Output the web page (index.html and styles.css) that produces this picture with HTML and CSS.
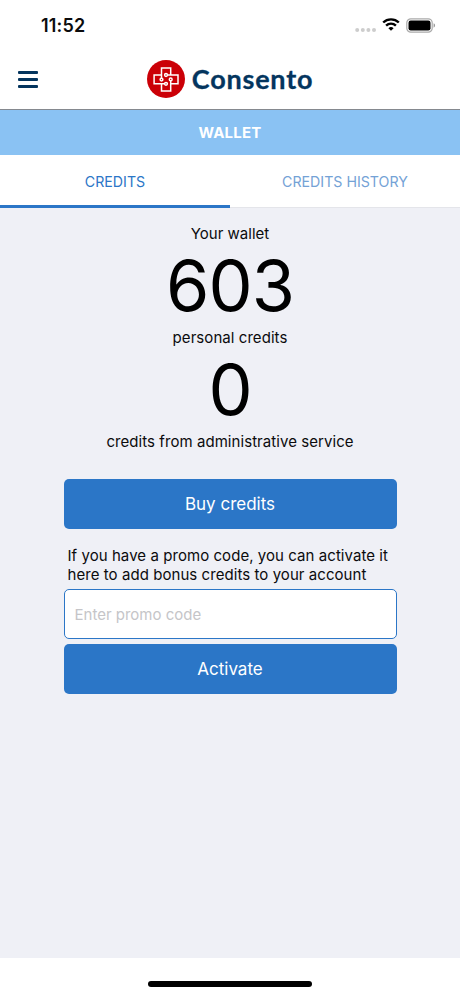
FILE: index.html
```html
<!DOCTYPE html>
<html lang="en">
<head>
  <meta charset="UTF-8" />
  <meta name="viewport" content="width=device-width, initial-scale=1" />
  <title>Consento - Wallet</title>
  <link rel="stylesheet" href="styles.css">
</head>
<body>
  <div class="status-bar">
    <span class="time">11:52</span>
    <div class="status-icons">
      <svg class="signal" viewBox="0 0 22 4">
        <circle cx="2.2" cy="2" r="2" />
        <circle cx="7.8" cy="2" r="2" />
        <circle cx="13.4" cy="2" r="2" />
        <circle cx="19" cy="2" r="2" />
      </svg>
      <svg class="wifi" viewBox="0 0 18 13">
        <path d="M1.2 4.5a11.3 11.3 0 0 1 15.6 0" />
        <path d="M4.1 7.6a7 7 0 0 1 9.8 0" />
        <path class="dot" d="M9 12.8 6.4 10.2a3.8 3.8 0 0 1 5.2 0z" />
      </svg>
      <svg class="battery" viewBox="0 0 30 15">
        <rect class="case" x="0.8" y="0.8" width="25.4" height="13.4" rx="4" />
        <rect x="2.5" y="2.5" width="22" height="10" rx="2.2" />
        <path class="cap" d="M27.6 5.3v4.4q1.5-.6 1.5-2.2t-1.5-2.2z" />
      </svg>
    </div>
  </div>

  <header class="header">
    <button class="menu" aria-label="Menu"><i></i><i></i><i></i></button>
    <div class="logo">
      <svg viewBox="0 0 38 38">
        <circle class="disc" cx="19" cy="19" r="19" />
        <path d="M20.4 15H31v8.8h-7.3v-3M23.7 23.8V31h-9.2v-7.2h3.1M14.5 23.8H7.1V15h7.4v3.2M14.5 15V7.9h9.2V15" />
        <circle cx="19" cy="15" r="1.4" />
        <circle cx="23.7" cy="19.4" r="1.4" />
        <circle cx="19" cy="23.8" r="1.4" />
        <circle cx="14.5" cy="19.6" r="1.4" />
      </svg>
      <span>Consento</span>
    </div>
  </header>

  <h1 class="title">WALLET</h1>

  <nav class="tabs">
    <a class="tab active">CREDITS</a>
    <a class="tab">CREDITS HISTORY</a>
  </nav>

  <main class="wallet">
    <p class="label">Your wallet</p>
    <div class="amount">603</div>
    <p class="label personal">personal credits</p>
    <div class="amount">0</div>
    <p class="label service">credits from administrative service</p>

    <div class="form">
      <button class="btn">Buy credits</button>
      <p class="promo">If you have a promo code, you can activate it<br>here to add bonus credits to your account</p>
      <input class="code" type="text" placeholder="Enter promo code" />
      <button class="btn">Activate</button>
    </div>
  </main>

  <footer class="home"><div class="home-bar"></div></footer>
</body>
</html>
```
FILE: styles.css
```css
* {
  box-sizing: border-box;
}

body {
  margin: 0;
  height: 996px;
  display: flex;
  flex-direction: column;
  background: #fff;
  color: #0b0b0d;
  font-family: Inter, "Liberation Sans", sans-serif;
  overflow: hidden;
}

button {
  border: none;
  padding: 0;
  font-family: inherit;
}

.status-bar {
  height: 50px;
  flex: none;
  display: flex;
  justify-content: space-between;
  padding: 0 24px 0 41px;
}

.time {
  margin-top: 15px;
  font-size: 18px;
  line-height: 21px;
  font-weight: 600;
  letter-spacing: 0.2px;
}

.status-icons {
  display: flex;
  align-items: flex-start;
}

.signal {
  width: 22px;
  height: 4px;
  margin-top: 28px;
  fill: #cdcdcd;
}

.wifi {
  width: 18px;
  height: 13px;
  margin: 18px 0 0 5px;
  fill: none;
  stroke: #000;
  stroke-width: 2.4;
}

.wifi .dot {
  fill: #000;
  stroke: none;
}

.battery {
  width: 30px;
  height: 15px;
  margin: 18px 0 0 6px;
}

.battery .case {
  fill: none;
  stroke: #aaa;
  stroke-width: 1.2;
}

.battery .cap {
  fill: #999;
}

.header {
  height: 60px;
  flex: none;
  display: grid;
  grid-template-columns: 1fr auto 1fr;
  align-items: start;
  border-bottom: 1px solid #85898f;
}

.menu {
  display: flex;
  flex-direction: column;
  gap: 4px;
  width: 20px;
  margin: 21px 0 0 18px;
  background: none;
}

.menu i {
  width: 20px;
  height: 3px;
  border-radius: 1px;
  background: #04355e;
}

.logo {
  display: flex;
  align-items: center;
  margin-top: 10px;
  gap: 7px;
  color: #04355e;
  font-family: Lato, sans-serif;
  font-size: 27px;
  font-weight: bold;
  line-height: 38px;
  letter-spacing: 0.8px;
  -webkit-text-stroke: 0.3px #04355e;
}

.logo svg {
  width: 38px;
  height: 38px;
  fill: none;
  stroke: #fff;
  stroke-width: 1.5;
}

.logo .disc {
  fill: #cb0007;
  stroke: none;
}

.title {
  height: 45px;
  flex: none;
  margin: 0;
  background: #8ac2f3;
  color: #fff;
  text-align: center;
  font-size: 15px;
  font-weight: 700;
  line-height: 45px;
  letter-spacing: 0.2px;
}

.tabs {
  height: 53px;
  flex: none;
  display: flex;
}

.tab {
  flex: 1;
  border-bottom: 1px solid #e4e5ea;
  color: #74a2d6;
  text-align: center;
  font-size: 14.2px;
  line-height: 53px;
}

.tab.active {
  border-bottom: 3px solid #2b76c7;
  color: #2b76c7;
}

.wallet {
  flex: 1;
  padding-top: 16px;
  background: #eff0f6;
  text-align: center;
}

.label {
  margin: 0;
  font-size: 15px;
  line-height: 20px;
}

.personal,
.service {
  letter-spacing: 0.06px;
}

.amount {
  height: 84px;
  color: #000;
  font-size: 70px;
  line-height: 84px;
  letter-spacing: -1px;
}

.form {
  display: flex;
  flex-direction: column;
  width: 333px;
  margin: 27px auto 0;
}

.btn {
  height: 50px;
  border-radius: 5px;
  background: #2b76c7;
  color: #fff;
  font-size: 17px;
}

.promo {
  margin: 17px 0 5px 4px;
  text-align: left;
  white-space: nowrap;
  font-size: 15px;
  line-height: 19px;
  letter-spacing: 0.06px;
}

.code {
  height: 50px;
  margin-bottom: 5px;
  padding: 0 10px;
  border: 1px solid #2b76c7;
  border-radius: 5px;
  background: #fff;
  font-family: inherit;
  font-size: 15px;
}

.code::placeholder {
  color: #c5c5c8;
}

.home {
  height: 38px;
  flex: none;
  padding-top: 23px;
  background: #fff;
}

.home-bar {
  width: 164px;
  height: 6px;
  margin: 0 auto;
  border-radius: 3px;
  background: #000;
}
```
